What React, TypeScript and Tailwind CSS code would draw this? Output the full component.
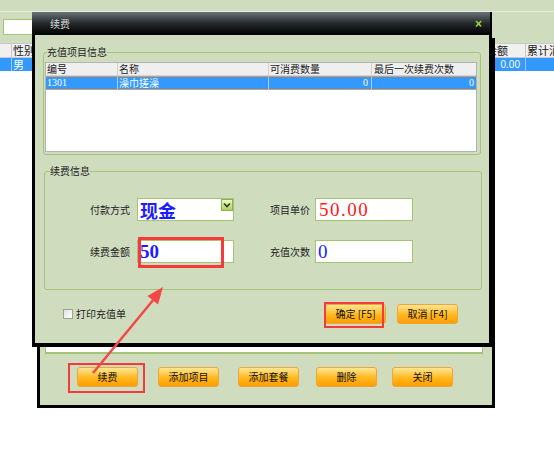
import type { ReactNode } from "react";

function OrangeButton({ children }: { children: ReactNode }) {
  return (
    <div className="flex h-[20px] w-[61px] items-center justify-center rounded-[3px] border border-[#eda63e] bg-linear-to-b from-[#ffe68e] via-[#ffbb1e] to-[#ff9d00] text-[10px] text-[#111]">
      {children}
    </div>
  );
}

function Field({ children }: { children: ReactNode }) {
  return (
    <div className="relative flex h-[23px] items-center border border-[#a4c478] bg-white pl-[2px]">
      {children}
    </div>
  );
}

export default function App() {
  return (
    <div className="relative h-[450px] w-[554px] overflow-hidden whitespace-nowrap bg-white font-['Noto_Sans_CJK_SC','Liberation_Sans',sans-serif] text-[10px] leading-none text-[#222]">
      {/* main window behind everything */}
      <div className="h-[43px] bg-[#d0dcbe]">
        <div className="h-[12px] border-b border-[#e6ece2]" />
        <div className="ml-[3px] mt-[7px] h-[16px] w-[80px] border border-[#a4c478] bg-white" />
      </div>
      <div className="flex h-[15px] border-y border-[#c8c8c8] bg-[#f0f0f0] text-[11px]">
        <div className="w-[12px] border-r border-[#c8c8c8]" />
        <div className="flex w-[60px] items-center pl-[1px]">性别</div>
        <div className="flex-1" />
        <div className="flex w-[46px] items-center border-r border-[#c8c8c8] pl-[6px]">余额</div>
        <div className="flex w-[28px] items-center overflow-hidden pl-[1px]">累计消费</div>
      </div>
      <div className="flex h-[13px] bg-[#3399ff] text-[11px] text-white">
        <div className="w-[12px] border-r border-[#9cc8f8]" />
        <div className="flex w-[60px] items-center pl-[1px]">男</div>
        <div className="flex-1" />
        <div className="flex w-[46px] items-center justify-end border-r border-[#9cc8f8] pr-[5px] font-['Liberation_Sans',sans-serif] text-[10px]">
          0.00
        </div>
        <div className="w-[28px]" />
      </div>

      {/* member window under the dialog */}
      <div className="absolute left-[37px] top-[38px] flex h-[370px] w-[458px] flex-col border-[3px] border-black bg-[#d0dcbe]">
        <div className="ml-[5px] mr-[9px] flex-1 border border-[#a4c478] border-b-[2px] bg-white" />
        <div className="flex pb-[18px] pl-[37px] pt-[13px]">
          <OrangeButton>续费</OrangeButton>
          <div className="ml-[20px]">
            <OrangeButton>添加项目</OrangeButton>
          </div>
          <div className="ml-[19px]">
            <OrangeButton>添加套餐</OrangeButton>
          </div>
          <div className="ml-[17px]">
            <OrangeButton>删除</OrangeButton>
          </div>
          <div className="ml-[15px]">
            <OrangeButton>关闭</OrangeButton>
          </div>
        </div>
      </div>

      {/* renewal dialog */}
      <div className="absolute left-[32px] top-[12px] flex h-[335px] w-[460px] flex-col bg-black px-[3px] pb-[4px]">
        <div className="ml-[-3px] mr-[-1px] flex h-[23px] items-center justify-between bg-linear-to-b from-[#6d7377] via-[#24292c] to-[#030303] pl-[18px] pr-[8px]">
          <span className="text-[10px] text-[#d4d4d4]">续费</span>
          <span className="font-['Liberation_Sans',sans-serif] text-[12px] font-bold text-[#a6d13a]">×</span>
        </div>

        <div className="flex flex-1 flex-col bg-[#d0dcbe]">
          <fieldset className="mx-[8px] mt-[11px] rounded-[3px] border border-[#a4c478] pb-[2px] pl-[1px] pr-[3px] pt-[4px]">
            <legend className="ml-[2px] px-0 leading-[12px]">充值项目信息</legend>
            <div className="h-[90px] border border-[#b4b4b4] bg-white">
              <div className="flex h-[13px] border-b border-[#d4d4d4] bg-[#efefef]">
                <div className="flex w-[72px] items-center border-r border-[#cfcfcf] pl-[1px]">编号</div>
                <div className="flex w-[151px] items-center border-r border-[#cfcfcf] pl-[1px]">名称</div>
                <div className="flex w-[103px] items-center border-r border-[#cfcfcf] pl-[1px]">可消费数量</div>
                <div className="flex flex-1 items-center pl-[2px]">最后一次续费次数</div>
              </div>
              <div className="flex h-[14px] border-y border-[#e09858] bg-[#3399ff] text-white">
                <div className="flex w-[72px] items-center border-r border-[#a8d0ff] pl-[1px] font-['Liberation_Serif',serif]">1301</div>
                <div className="flex w-[151px] items-center border-r border-[#a8d0ff] pl-[1px]">澡巾搓澡</div>
                <div className="flex w-[103px] items-center justify-end border-r border-[#a8d0ff] pr-[3px] font-['Liberation_Serif',serif]">0</div>
                <div className="flex flex-1 items-center justify-end pr-[2px] font-['Liberation_Serif',serif]">0</div>
              </div>
            </div>
          </fieldset>

          <fieldset className="ml-[9px] mr-[7px] mt-[10px] rounded-[3px] border border-[#a4c478] pb-[26px] pt-[21px]">
            <legend className="ml-[5px] px-0 leading-[12px]">续费信息</legend>
            <div className="flex flex-col gap-[19px]">
              <div className="flex items-center">
                <div className="w-[85px] text-right">付款方式</div>
                <div className="ml-[7px] w-[97px]">
                  <Field>
                    <span className="text-[18px] font-bold text-[#1c1cff]">现金</span>
                    <div className="absolute right-0 top-0 flex h-[12px] w-[12px] items-center justify-center border border-[#8db14f] bg-linear-to-b from-[#eef8c8] to-[#a9d25c]">
                      <svg width="8" height="6" viewBox="0 0 8 6">
                        <path d="M1 1.5 L4 4.5 L7 1.5" fill="none" stroke="#2f3a1c" strokeWidth="1.6" />
                      </svg>
                    </div>
                  </Field>
                </div>
                <div className="w-[76px] text-right">项目单价</div>
                <div className="ml-[5px] w-[98px]">
                  <Field>
                    <span className="pl-[1px] font-['Liberation_Serif',serif] text-[19px] tracking-[1.5px] text-[#ff1a1a]">50.00</span>
                  </Field>
                </div>
              </div>
              <div className="flex items-center">
                <div className="w-[85px] text-right">续费金额</div>
                <div className="ml-[7px] w-[97px]">
                  <Field>
                    <span className="font-['Liberation_Serif',serif] text-[19px] font-bold text-[#1c1cff]">50</span>
                  </Field>
                </div>
                <div className="w-[76px] text-right">充值次数</div>
                <div className="ml-[5px] w-[98px]">
                  <Field>
                    <span className="font-['Liberation_Serif',serif] text-[19px] text-[#1c1cff]">0</span>
                  </Field>
                </div>
              </div>
            </div>
          </fieldset>

          <div className="mt-[14px] flex h-[20px] items-center pl-[28px] pr-[31px]">
            <div className="h-[10px] w-[10px] border border-[#9aa48e] bg-linear-to-br from-[#e2e2e2] to-white" />
            <span className="ml-[3px]">打印充值单</span>
            <div className="ml-auto flex gap-[11px]">
              <OrangeButton>确定 [F5]</OrangeButton>
              <OrangeButton>取消 [F4]</OrangeButton>
            </div>
          </div>
        </div>
      </div>

      {/* annotations */}
      <div className="absolute left-[138px] top-[237px] h-[31px] w-[86px] border-[3px] border-[#f43a3a]" />
      <div className="absolute left-[324px] top-[302px] h-[26px] w-[60px] border-2 border-[#f43a3a]" />
      <div className="absolute left-[68px] top-[363px] h-[30px] w-[77px] border-2 border-[#f43a3a]" />
      <svg className="pointer-events-none absolute left-0 top-0" width="554" height="450">
        <line x1="93" y1="373" x2="154" y2="299" stroke="#f44848" strokeWidth="2.5" />
        <polygon points="163,287 158,304.5 147.5,296" fill="#f44848" />
      </svg>
    </div>
  );
}
